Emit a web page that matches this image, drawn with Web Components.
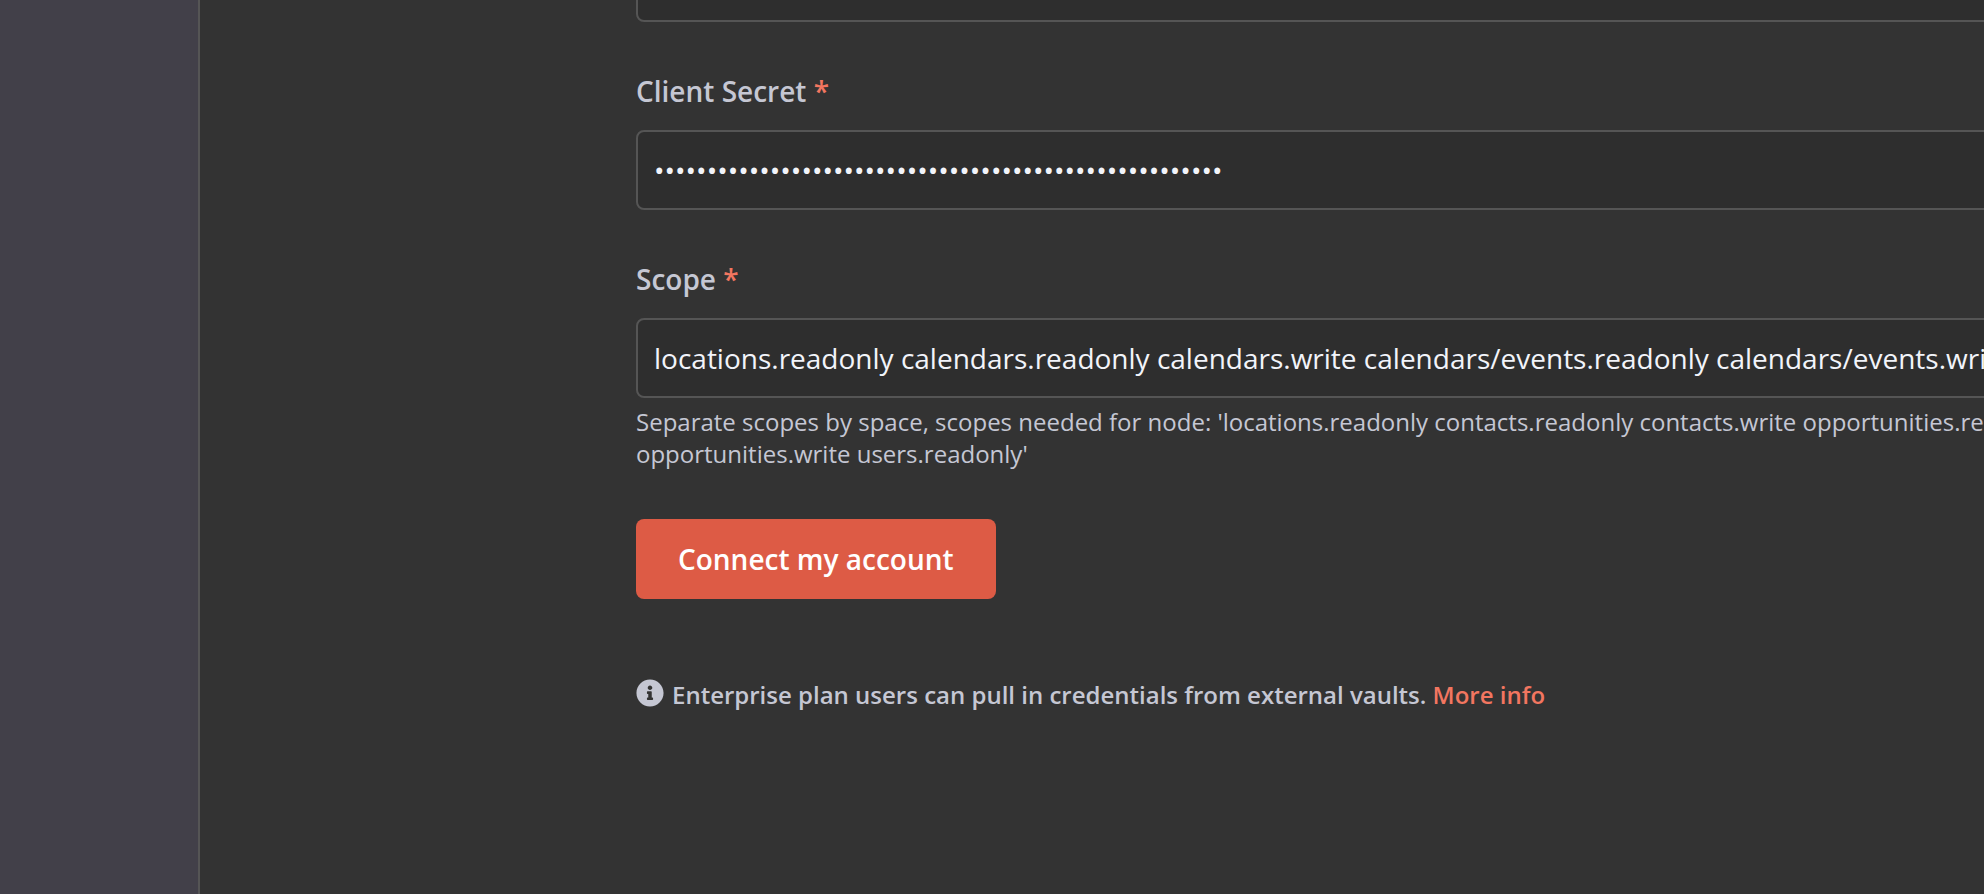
<!DOCTYPE html>
<html lang="en">
<head>
<meta charset="utf-8">
<title>Credentials</title>
<style>
  html, body { margin: 0; height: 100%; }
  body {
    overflow: hidden;
    background: #424049;
    color: #c5c7d3;
    font-family: "Open Sans", sans-serif;
    --accent: #f27660;
    --border: #555555;
  }
</style>
</head>
<body>
<credential-page></credential-page>

<template id="page-template">
  <style>
    :host { display: flex; height: 100vh; overflow: hidden; }
    .backdrop { flex: 0 0 198px; background: #424049; }
    main {
      flex: 1;
      min-width: 0;
      display: flex;
      overflow: hidden;
      background: #333333;
      border-left: 2px solid var(--border);
    }
    nav { flex: 0 0 436px; }
    form {
      flex: 0 0 76vw;
      display: flex;
      flex-direction: column;
      align-items: flex-start;
      gap: 49px;
      margin-top: -58px;
    }
    form > * { flex-shrink: 0; }
    form-field { align-self: stretch; }
    enterprise-note { margin-top: 31px; }
  </style>
  <div class="backdrop"></div>
  <main>
    <nav aria-label="Credential sections"></nav>
    <form>
      <form-field name="Client ID" bare></form-field>
      <form-field name="Client Secret" type="password"></form-field>
      <form-field name="Scope" value="locations.readonly calendars.readonly calendars.write calendars/events.readonly calendars/events.write contacts.readonly contacts.write">Separate scopes by space, scopes needed for node: 'locations.readonly contacts.readonly contacts.write opportunities.readonly opportunities.write users.readonly'</form-field>
      <connect-button>Connect my account</connect-button>
      <enterprise-note>Enterprise plan users can pull in credentials from external vaults.<a slot="link" href="#">More info</a></enterprise-note>
    </form>
  </main>
</template>

<template id="field-template">
  <style>
    :host { display: block; }
    label {
      display: block;
      margin-bottom: 18px;
      font-size: 28px;
      line-height: 41px;
      font-weight: 600;
    }
    .required { color: var(--accent); }
    input {
      display: block;
      box-sizing: border-box;
      width: 100%;
      height: 80px;
      padding: 0 16px;
      border: 2px solid var(--border);
      border-radius: 8px;
      outline: none;
      background: #2e2e2e;
      color: #f2f4fa;
      font: 400 28px "Open Sans", sans-serif;
    }
    .hint { margin-top: 8px; font-size: 24px; line-height: 32px; }
  </style>
</template>

<template id="button-template">
  <style>
    :host { display: block; }
    button {
      display: block;
      height: 80px;
      padding: 0 42px;
      border: 0;
      border-radius: 8px;
      background: #dd5b45;
      color: #ffffff;
      font: 600 28px "Open Sans", sans-serif;
    }
  </style>
  <button type="button"><slot></slot></button>
</template>

<template id="note-template">
  <style>
    :host {
      display: flex;
      gap: 8px;
      font-size: 24px;
      line-height: 32px;
      font-weight: 600;
    }
    svg { width: 28px; height: 28px; }
    ::slotted(a) { color: var(--accent); text-decoration: none; }
  </style>
  <svg viewBox="0 0 512 512" aria-hidden="true"><path fill="currentColor" d="M256 8C119 8 8 119 8 256s111 248 248 248 248-111 248-248S393 8 256 8zm0 110c23 0 42 19 42 42s-19 42-42 42-42-19-42-42 19-42 42-42zm56 254c0 7-5 12-12 12h-88c-7 0-12-5-12-12v-24c0-7 5-12 12-12h12v-64h-12c-7 0-12-5-12-12v-24c0-7 5-12 12-12h64c7 0 12 5 12 12v100h12c7 0 12 5 12 12v24z"/></svg>
  <span><slot></slot> <slot name="link"></slot></span>
</template>

<script>
  class TemplateElement extends HTMLElement {
    constructor() {
      super();
      this.attachShadow({ mode: "open" });
      const template = document.getElementById(this.constructor.template);
      this.shadowRoot.append(template.content.cloneNode(true));
    }
  }

  class FormField extends TemplateElement {
    static template = "field-template";
    connectedCallback() {
      const root = this.shadowRoot;
      if (root.querySelector("input")) return;
      const name = this.getAttribute("name");
      const input = document.createElement("input");
      input.id = "control";
      input.type = this.getAttribute("type") || "text";
      input.value = input.type === "password" ? "x".repeat(54) : this.getAttribute("value") || "";
      if (this.hasAttribute("bare")) {
        input.setAttribute("aria-label", name);
      } else {
        const label = document.createElement("label");
        label.htmlFor = "control";
        const star = document.createElement("span");
        star.className = "required";
        star.textContent = "*";
        label.append(name + " ", star);
        root.append(label);
      }
      root.append(input);
      if (this.textContent.trim()) {
        const hint = document.createElement("div");
        hint.className = "hint";
        hint.append(document.createElement("slot"));
        root.append(hint);
      }
    }
  }

  class ConnectButton extends TemplateElement { static template = "button-template"; }
  class EnterpriseNote extends TemplateElement { static template = "note-template"; }
  class CredentialPage extends TemplateElement { static template = "page-template"; }

  customElements.define("form-field", FormField);
  customElements.define("connect-button", ConnectButton);
  customElements.define("enterprise-note", EnterpriseNote);
  customElements.define("credential-page", CredentialPage);
</script>
</body>
</html>
